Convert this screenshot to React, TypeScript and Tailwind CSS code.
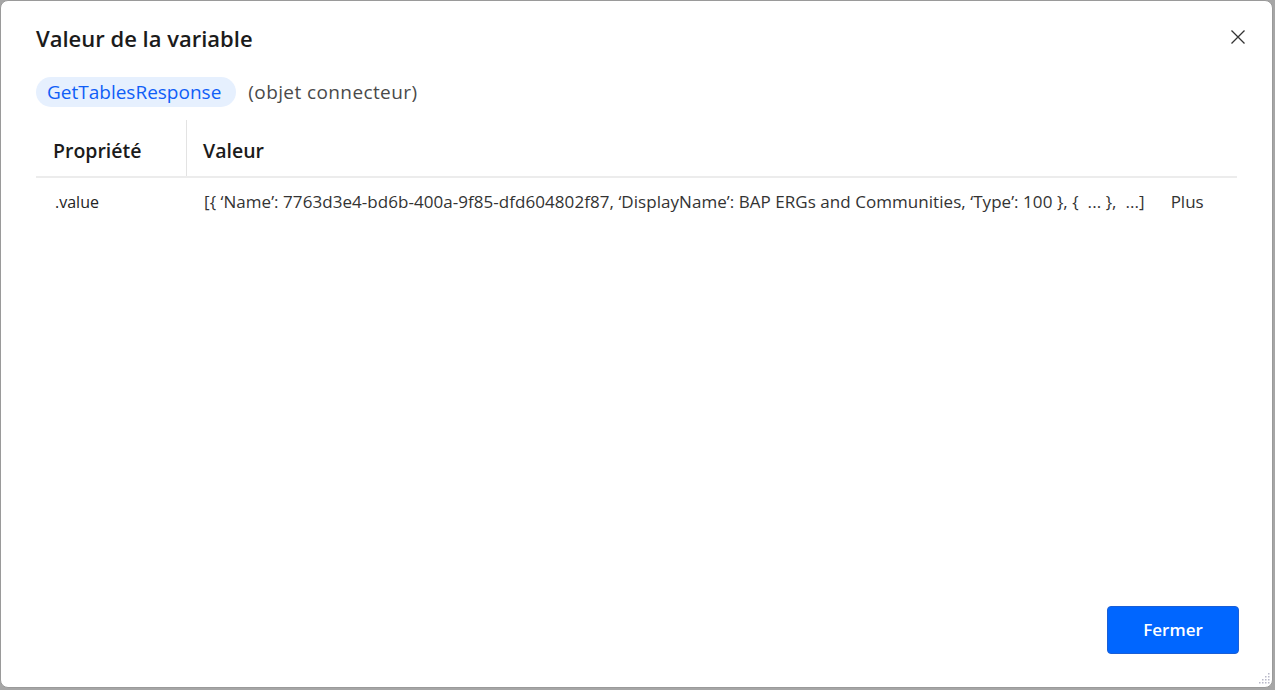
import React from "react";

export default function App() {
  return (
    <div className="w-[1275px] h-[690px] bg-[#a6a6a6] overflow-hidden" style={{ fontFamily: '"Open Sans", "Noto Sans", sans-serif' }}>
      <div className="relative w-[1273px] h-[688px] bg-white rounded-[8px] border border-[#9a9a9a] flex flex-col">
        <div className="flex items-center justify-between pl-[35px] pr-[26px] pt-[17px] h-[56px]">
          <h1 className="text-[22px] font-semibold text-[#1b1b1b] leading-none">Valeur de la variable</h1>
          <svg width="16" height="16" viewBox="0 0 16 16" className="mt-[-1px]">
            <path d="M1.5 1.5 L14.5 14.5 M14.5 1.5 L1.5 14.5" stroke="#333" strokeWidth="1.3" />
          </svg>
        </div>
        <div className="flex items-center pl-[35px] mt-[20px] gap-[12px]">
          <span className="h-[30px] pl-[11px] pr-[15px] rounded-full bg-[#e6f0fe] text-[#0f5ef7] text-[19px] leading-[30px]">GetTablesResponse</span>
          <span className="text-[19px] text-[#4a4a4a] leading-[30px] tracking-[0.4px]">(objet connecteur)</span>
        </div>
        <div className="mx-[35px] mt-[13px]">
          <div className="flex h-[58px] border-b-2 border-[#ececec]">
            <div className="w-[151px] border-r border-[#e3e3e3] flex items-center pt-[5px] pl-[17px] text-[19.5px] font-semibold text-[#1b1b1b]">Propriété</div>
            <div className="flex items-center pt-[5px] pl-[16px] text-[19.5px] font-semibold text-[#1b1b1b]">Valeur</div>
          </div>
          <div className="flex h-[48px] items-center text-[16px] text-[#242424]">
            <div className="w-[152px] pl-[19px]">.value</div>
            <div className="pl-[16px] whitespace-pre text-[17px] tracking-[0.05px] text-[#333]">[{"{"} ‘Name’: 7763d3e4-bd6b-400a-9f85-dfd604802f87, ‘DisplayName’: BAP ERGs and Communities, ‘Type’: 100 {"}"}, {"{"}  ... {"}"},  ...]</div>
            <div className="ml-[26px] text-[17px] text-[#333]">Plus</div>
          </div>
        </div>
        <div className="flex-1" />
        <div className="flex justify-end pr-[33px] pb-[33px]">
          <button className="w-[132px] h-[48px] bg-[#0066ff] border border-[#1a5fd6] rounded-[4px] text-white text-[17px] font-semibold">Fermer</button>
        </div>
        <svg width="14" height="14" viewBox="0 0 14 14" className="absolute right-[2px] bottom-[2px]">
          {[[12,2],[12,5],[9,5],[12,8],[9,8],[6,8],[12,11],[9,11],[6,11],[3,11]].map(([x,y],i)=>(
            <rect key={i} x={x} y={y} width="1.5" height="1.5" fill="#b8b8c8" />
          ))}
        </svg>
      </div>
    </div>
  );
}
